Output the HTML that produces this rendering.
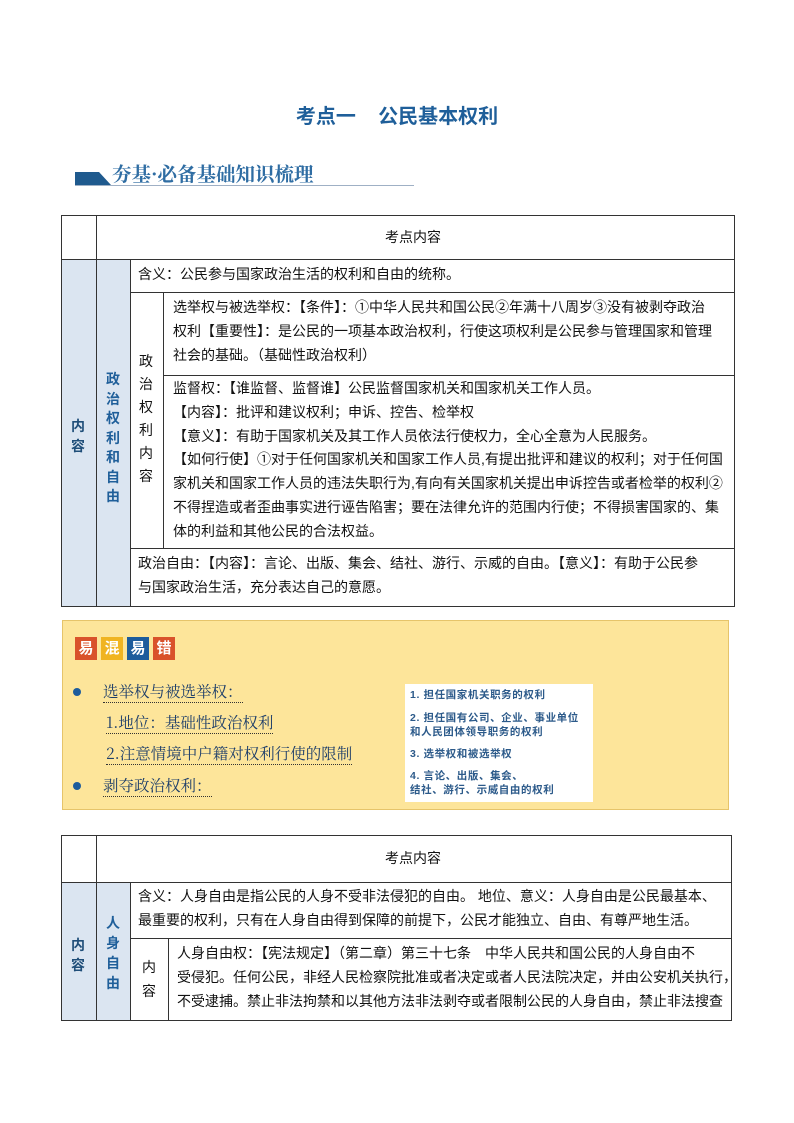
<!DOCTYPE html>
<html><head><meta charset="utf-8"><style>
*{margin:0;padding:0;box-sizing:border-box}
body{width:794px;height:1123px;background:#fff;position:relative;font-family:"Liberation Sans","Noto Sans CJK SC",sans-serif;color:#111;overflow:hidden}
.a{position:absolute}
.b{position:absolute;background:#333}
.t{position:absolute;font-size:14px;line-height:23.8px;white-space:nowrap}
.v{position:absolute;font-size:14px;line-height:20px;width:20px;text-align:center}
.blue{background:#dbe5f1}
.y{position:absolute;font-size:15.5px;color:#1f3f6a;border-bottom:1px dotted #333;font-family:'Noto Serif CJK SC',serif;white-space:nowrap}
</style></head><body>
<div class="a" style="left:0;width:794px;top:100px;text-align:center;font-size:20px;font-weight:bold;color:#1f5f9a">考点一&nbsp;&nbsp;&nbsp;&nbsp;公民基本权利</div>
<div class="a" style="left:75px;top:172px;height:0;border-bottom:13px solid #1f5a8e;border-right:12px solid transparent;width:36px"></div>
<div class="a" style="left:112px;top:159px;font-size:19.5px;font-weight:bold;color:#2f6da3;font-family:'Noto Serif CJK SC',serif;white-space:nowrap">夯基·必备基础知识梳理</div>
<div class="a" style="left:75px;top:185px;width:339px;height:1px;background:#9fb0c5"></div>

<div class="a blue" style="left:61px;top:259px;width:69px;height:347px"></div>
<div class="b" style="left:61px;top:215px;width:673px;height:1px"></div>
<div class="b" style="left:61px;top:259px;width:673px;height:1px"></div>
<div class="b" style="left:130px;top:292px;width:604px;height:1px"></div>
<div class="b" style="left:163px;top:375px;width:571px;height:1px"></div>
<div class="b" style="left:130px;top:548px;width:604px;height:1px"></div>
<div class="b" style="left:61px;top:606px;width:674px;height:1px"></div>
<div class="b" style="left:61px;top:215px;width:1px;height:391px"></div>
<div class="b" style="left:96px;top:215px;width:1px;height:391px"></div>
<div class="b" style="left:130px;top:259px;width:1px;height:347px"></div>
<div class="b" style="left:163px;top:292px;width:1px;height:256px"></div>
<div class="b" style="left:734px;top:215px;width:1px;height:391px"></div>
<div class="t" style="left:385px;top:226px">考点内容</div>
<div class="v" style="left:68px;top:416px;color:#1f4e79;font-weight:bold">内容</div>
<div class="v" style="left:103px;top:370px;color:#1f5f9a;line-height:19.5px;font-weight:bold">政治权利和自由</div>
<div class="v" style="left:136px;top:350px;line-height:23px">政治权利内容</div>
<div class="t" style="left:138px;top:263px">含义：公民参与国家政治生活的权利和自由的统称。</div>
<div class="t" style="left:173px;top:296px">选举权与被选举权：【条件】：①中华人民共和国公民②年满十八周岁③没有被剥夺政治<br>权利【重要性】：是公民的一项基本政治权利，行使这项权利是公民参与管理国家和管理<br>社会的基础。（基础性政治权利）</div>
<div class="t" style="left:173px;top:377px">监督权：【谁监督、监督谁】公民监督国家机关和国家机关工作人员。<br>【内容】：批评和建议权利；申诉、控告、检举权<br>【意义】：有助于国家机关及其工作人员依法行使权力，全心全意为人民服务。<br>【如何行使】①对于任何国家机关和国家工作人员,有提出批评和建议的权利；对于任何国<br>家机关和国家工作人员的违法失职行为,有向有关国家机关提出申诉控告或者检举的权利②<br>不得捏造或者歪曲事实进行诬告陷害；要在法律允许的范围内行使；不得损害国家的、集<br>体的利益和其他公民的合法权益。</div>
<div class="t" style="left:138px;top:552px">政治自由：【内容】：言论、出版、集会、结社、游行、示威的自由。【意义】：有助于公民参<br>与国家政治生活，充分表达自己的意愿。</div>

<div class="a" style="left:62px;top:620px;width:667px;height:190px;background:#fde59a;border:1px solid #e6c46a"></div>
<div class="a" style="left:75px;top:637px;width:22px;height:23px;background:#d9522b;color:#fff;font-weight:bold;font-size:15px;text-align:center;line-height:23px">易</div>
<div class="a" style="left:101px;top:637px;width:22px;height:23px;background:#f0b421;color:#fff;font-weight:bold;font-size:15px;text-align:center;line-height:23px">混</div>
<div class="a" style="left:127px;top:637px;width:22px;height:23px;background:#1d5c9c;color:#fff;font-weight:bold;font-size:15px;text-align:center;line-height:23px">易</div>
<div class="a" style="left:153px;top:637px;width:22px;height:23px;background:#d9522b;color:#fff;font-weight:bold;font-size:15px;text-align:center;line-height:23px">错</div>
<div class="a" style="left:73px;top:688px;width:8px;height:8px;border-radius:50%;background:#1d5c9c"></div>
<div class="a" style="left:73px;top:782px;width:8px;height:8px;border-radius:50%;background:#1d5c9c"></div>
<div class="y" style="left:103px;top:680px">选举权与被选举权：</div>
<div class="y" style="left:106px;top:711px">1.地位：基础性政治权利</div>
<div class="y" style="left:106px;top:742px">2.注意情境中户籍对权利行使的限制</div>
<div class="y" style="left:103px;top:774px">剥夺政治权利：</div>
<div class="a" style="left:405px;top:684px;width:188px;height:118px;background:#fff"></div>
<div class="a" style="left:410px;top:688px;font-size:10.5px;line-height:14px;color:#2c5a8a;font-weight:bold;white-space:nowrap;letter-spacing:0.6px">1. 担任国家机关职务的权利<div style="height:9px"></div>2. 担任国有公司、企业、事业单位<br>和人民团体领导职务的权利<div style="height:8px"></div>3. 选举权和被选举权<div style="height:8px"></div>4. 言论、出版、集会、<br>结社、游行、示威自由的权利</div>

<div class="a blue" style="left:61px;top:882px;width:69px;height:138px"></div>
<div class="b" style="left:61px;top:835px;width:670px;height:1px"></div>
<div class="b" style="left:61px;top:882px;width:670px;height:1px"></div>
<div class="b" style="left:130px;top:938px;width:601px;height:1px"></div>
<div class="b" style="left:61px;top:1020px;width:671px;height:1px"></div>
<div class="b" style="left:61px;top:835px;width:1px;height:185px"></div>
<div class="b" style="left:96px;top:835px;width:1px;height:185px"></div>
<div class="b" style="left:130px;top:882px;width:1px;height:138px"></div>
<div class="b" style="left:168px;top:938px;width:1px;height:82px"></div>
<div class="b" style="left:731px;top:835px;width:1px;height:185px"></div>
<div class="t" style="left:385px;top:847px">考点内容</div>
<div class="v" style="left:68px;top:935px;color:#1f4e79;font-weight:bold">内容</div>
<div class="v" style="left:103px;top:913px;color:#1f5f9a;font-weight:bold">人身自由</div>
<div class="v" style="left:139px;top:955px;line-height:24px">内容</div>
<div class="t" style="left:138px;top:885px">含义：人身自由是指公民的人身不受非法侵犯的自由。 地位、意义：人身自由是公民最基本、<br>最重要的权利，只有在人身自由得到保障的前提下，公民才能独立、自由、有尊严地生活。</div>
<div class="t" style="left:177px;top:942px">人身自由权：【宪法规定】（第二章）第三十七条　中华人民共和国公民的人身自由不<br>受侵犯。任何公民，非经人民检察院批准或者决定或者人民法院决定，并由公安机关执行，<br>不受逮捕。禁止非法拘禁和以其他方法非法剥夺或者限制公民的人身自由，禁止非法搜查</div>
</body></html>
